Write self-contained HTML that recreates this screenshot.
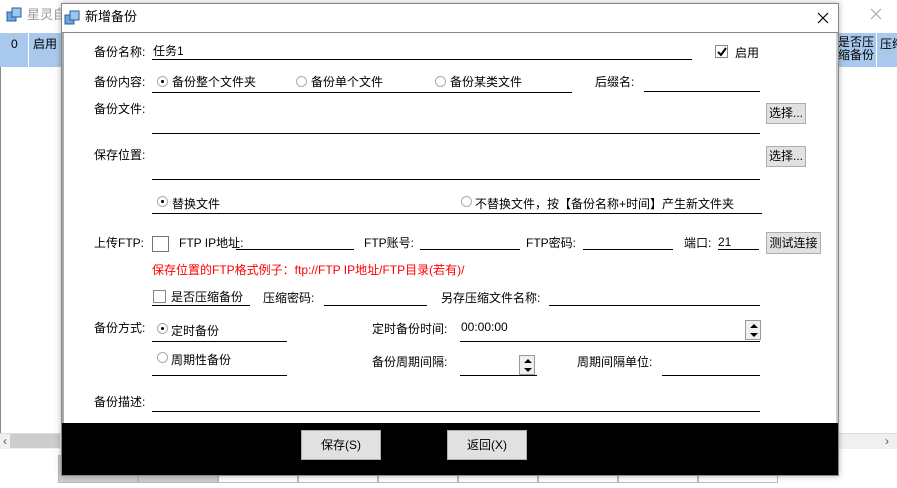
<!DOCTYPE html>
<html><head><meta charset="utf-8"><style>
*{margin:0;padding:0;box-sizing:border-box}
body{width:897px;height:488px;background:#fff;position:relative;overflow:hidden;font-family:"Liberation Sans","Noto Sans CJK SC",sans-serif;font-size:12px;color:#000}
.a{position:absolute;white-space:nowrap;line-height:14px}
.l{position:absolute;height:1px;background:#000}
.rb{position:absolute;width:11px;height:11px;border-radius:50%;border:1px solid #aaa;background:#fff}
.rb.on::after{content:"";position:absolute;left:3px;top:3px;width:3px;height:3px;border-radius:50%;background:#000}
.cb{position:absolute;width:13px;height:13px;border:1px solid #888;background:#fff}
.btn{position:absolute;background:#e1e1e1;border:1px solid #adadad;text-align:center;font-size:12px}
.sp{position:absolute;width:16px;height:20px;border:1px solid #999;background:#f0f0f0}
.sp i{position:absolute;left:4px;width:0;height:0;border-left:4px solid transparent;border-right:4px solid transparent}
</style></head><body>
<div class="a" style="left:6px;top:7px;width:16px;height:16px"><svg width="16" height="16"><rect x="1" y="5" width="9" height="9" fill="#6aa6dc" stroke="#2a5f9c"/><rect x="6" y="1" width="9" height="9" fill="#9cc7ee" stroke="#2a5f9c"/></svg></div>
<div class="a" style="left:27px;top:8px;color:#999;font-size:13px">星灵自</div>
<svg style="position:absolute;left:870px;top:8px" width="12" height="12"><path d="M1 1L11 11M11 1L1 11" stroke="#aaa" stroke-width="1.2"/></svg>
<div style="position:absolute;left:0;top:33px;width:61px;height:34px;background:#a8c9ec"></div>
<div style="position:absolute;left:28px;top:33px;width:1px;height:34px;background:#fff"></div>
<div class="a" style="left:11px;top:37px">0</div>
<div class="a" style="left:33px;top:37px">启用</div>
<div style="position:absolute;left:838px;top:33px;width:59px;height:34px;background:#a8c9ec"></div>
<div style="position:absolute;left:876px;top:33px;width:1px;height:34px;background:#fff"></div>
<div class="a" style="left:838px;top:36px;line-height:13px">是否压<br>缩备份</div>
<div class="a" style="left:880px;top:37px">压缩</div>
<div style="position:absolute;left:0;top:67px;width:1px;height:366px;background:#888"></div>
<div style="position:absolute;left:0;top:433px;width:897px;height:16px;background:#f0f0f0;border-top:1px solid #ddd"></div>
<div style="position:absolute;left:10px;top:434px;width:50px;height:14px;background:#cdcdcd"></div>
<div class="a" style="left:3px;top:434px;color:#555">‹</div>
<div class="a" style="left:885px;top:434px;color:#555">›</div>
<div style="position:absolute;left:58px;top:455px;width:730px;height:28px;display:flex">
<div style="width:80px;border:1px solid #bbb;background:#ccc"></div><div style="width:80px;border:1px solid #bbb;background:#ccc"></div>
<div style="width:80px;border:1px solid #bbb"></div><div style="width:80px;border:1px solid #bbb"></div><div style="width:80px;border:1px solid #bbb"></div><div style="width:80px;border:1px solid #bbb"></div><div style="width:80px;border:1px solid #bbb"></div><div style="width:80px;border:1px solid #bbb"></div><div style="width:80px;border:1px solid #bbb"></div>
</div>
<div style="position:absolute;left:61px;top:3px;width:778px;height:473px;background:#fff;border:1px solid #888;box-shadow:0 0 6px rgba(0,0,0,.3)"></div>
<div style="position:absolute;left:62px;top:32px;width:776px;height:1px;background:#888"></div>
<div style="position:absolute;left:62px;top:33px;width:2px;height:390px;background:#aaa"></div>
<div style="position:absolute;left:836px;top:33px;width:2px;height:390px;background:#ccc"></div>
<div class="a" style="left:64px;top:10px"><svg width="16" height="16"><rect x="1" y="5" width="9" height="9" fill="#6aa6dc" stroke="#2a5f9c"/><rect x="6" y="1" width="9" height="9" fill="#9cc7ee" stroke="#2a5f9c"/></svg></div>
<div class="a" style="left:85px;top:10px;font-size:13px">新增备份</div>
<svg style="position:absolute;left:817px;top:12px" width="12" height="12"><path d="M1 1L11 11M11 1L1 11" stroke="#000" stroke-width="1.2"/></svg>

<div class="a" style="left:94px;top:45px">备份名称:</div>
<div class="a" style="left:153px;top:44px">任务1</div>
<div class="l" style="left:152px;top:59px;width:540px"></div>
<div class="cb" style="left:715px;top:45px"></div>
<svg style="position:absolute;left:717px;top:47px" width="10" height="10"><path d="M1 5L4 8L9 1" stroke="#000" stroke-width="2" fill="none"/></svg>
<div class="a" style="left:735px;top:46px">启用</div>

<div class="a" style="left:94px;top:75px">备份内容:</div>
<div class="rb on" style="left:157px;top:76px"></div><div class="a" style="left:172px;top:75px">备份整个文件夹</div>
<div class="rb" style="left:296px;top:76px"></div><div class="a" style="left:311px;top:75px">备份单个文件</div>
<div class="rb" style="left:435px;top:76px"></div><div class="a" style="left:450px;top:75px">备份某类文件</div>
<div class="l" style="left:152px;top:92px;width:420px"></div>
<div class="a" style="left:595px;top:75px">后缀名:</div>
<div class="l" style="left:644px;top:91px;width:116px"></div>

<div class="a" style="left:94px;top:102px">备份文件:</div>
<div class="l" style="left:152px;top:133px;width:608px"></div>
<div class="btn" style="left:766px;top:103px;width:40px;height:21px;line-height:19px">选择...</div>

<div class="a" style="left:94px;top:148px">保存位置:</div>
<div class="l" style="left:152px;top:179px;width:608px"></div>
<div class="btn" style="left:766px;top:146px;width:40px;height:21px;line-height:19px">选择...</div>

<div class="rb on" style="left:157px;top:196px"></div><div class="a" style="left:172px;top:197px">替换文件</div>
<div class="rb" style="left:461px;top:196px"></div><div class="a" style="left:475px;top:197px">不替换文件，按【备份名称+时间】产生新文件夹</div>
<div class="l" style="left:152px;top:213px;width:610px"></div>

<div class="a" style="left:94px;top:236px">上传FTP:</div>
<div class="cb" style="left:152px;top:236px;width:17px;height:16px;border-color:#777"></div>
<div class="a" style="left:179px;top:236px">FTP IP地址:</div>
<div class="l" style="left:236px;top:249px;width:118px"></div>
<div class="a" style="left:364px;top:236px">FTP账号:</div>
<div class="l" style="left:420px;top:249px;width:100px"></div>
<div class="a" style="left:526px;top:236px">FTP密码:</div>
<div class="l" style="left:583px;top:249px;width:90px"></div>
<div class="a" style="left:684px;top:236px">端口:</div>
<div class="a" style="left:718px;top:235px">21</div>
<div class="l" style="left:718px;top:249px;width:41px"></div>
<div class="btn" style="left:766px;top:232px;width:55px;height:22px;line-height:20px">测试连接</div>

<div class="a" style="left:152px;top:263px;color:#f00">保存位置的FTP格式例子：ftp://FTP IP地址/FTP目录(若有)/</div>

<div class="cb" style="left:153px;top:290px"></div>
<div class="a" style="left:171px;top:290px">是否压缩备份</div>
<div class="l" style="left:152px;top:305px;width:98px"></div>
<div class="a" style="left:263px;top:291px">压缩密码:</div>
<div class="l" style="left:324px;top:305px;width:103px"></div>
<div class="a" style="left:441px;top:291px">另存压缩文件名称:</div>
<div class="l" style="left:549px;top:305px;width:211px"></div>

<div class="a" style="left:94px;top:321px">备份方式:</div>
<div class="rb on" style="left:157px;top:323px"></div><div class="a" style="left:171px;top:324px">定时备份</div>
<div class="l" style="left:152px;top:341px;width:135px"></div>
<div class="a" style="left:372px;top:322px">定时备份时间:</div>
<div class="a" style="left:461px;top:320px">00:00:00</div>
<div class="l" style="left:460px;top:341px;width:300px"></div>
<div class="sp" style="left:745px;top:320px"><i style="top:3px;border-bottom:4px solid #000"></i><i style="top:12px;border-top:4px solid #000"></i></div>

<div class="rb" style="left:157px;top:352px"></div><div class="a" style="left:171px;top:353px">周期性备份</div>
<div class="l" style="left:152px;top:375px;width:135px"></div>
<div class="a" style="left:372px;top:355px">备份周期间隔:</div>
<div class="l" style="left:460px;top:375px;width:77px"></div>
<div class="sp" style="left:519px;top:355px"><i style="top:3px;border-bottom:4px solid #000"></i><i style="top:12px;border-top:4px solid #000"></i></div>
<div class="a" style="left:577px;top:355px">周期间隔单位:</div>
<div class="l" style="left:662px;top:375px;width:98px"></div>

<div class="a" style="left:94px;top:395px">备份描述:</div>
<div class="l" style="left:152px;top:411px;width:608px"></div>

<div style="position:absolute;left:62px;top:423px;width:776px;height:52px;background:#000"></div>
<div class="btn" style="left:301px;top:430px;width:80px;height:30px;line-height:28px">保存(S)</div>
<div class="btn" style="left:447px;top:430px;width:80px;height:30px;line-height:28px">返回(X)</div>
</body></html>
